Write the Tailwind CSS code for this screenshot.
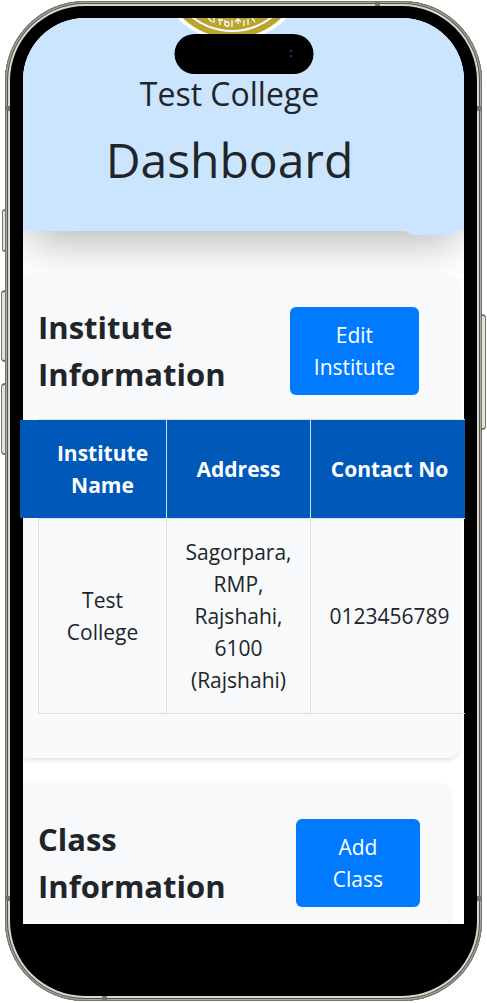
<!DOCTYPE html>
<html lang="en">
<head>
  <meta charset="UTF-8">
  <meta name="viewport" content="width=device-width, initial-scale=1">
  <title>Test College Dashboard</title>
  <script src="https://cdn.jsdelivr.net/npm/@tailwindcss/browser@4"></script>
</head>
<body class="bg-white px-[5px] py-px font-['Open_Sans',sans-serif] text-[#212529]">

  <!-- Phone frame -->
  <div class="relative rounded-[80px] bg-black px-[18px] pt-[17px] pb-[77px] shadow-[inset_0_0_0_1px_#77736c,inset_0_0_0_2px_#aaa69e,inset_0_0_0_3px_#57534d,inset_0_0_0_5px_#d9d6cd]">

    <!-- Side buttons -->
    <div class="absolute -left-[3px] top-[208px] h-[43px] w-[3px] rounded-l-sm border-y-2 border-l border-[#77736c] bg-[#e4e2dc]"></div>
    <div class="absolute -left-[4px] top-[289px] h-[72px] w-[4px] rounded-l-sm border-y-2 border-l border-[#77736c] bg-[#e4e2dc]"></div>
    <div class="absolute -left-[4px] top-[382px] h-[72px] w-[4px] rounded-l-sm border-y-2 border-l border-[#77736c] bg-[#e4e2dc]"></div>
    <div class="absolute -right-[4px] top-[313px] h-[116px] w-[4px] rounded-r-sm border-y-2 border-r border-[#77736c] bg-[#e4e2dc]"></div>

    <!-- Antenna bands -->
    <div class="absolute left-0 top-[105px] h-[5px] w-[5px] bg-[#77736c]"></div>
    <div class="absolute right-0 top-[105px] h-[5px] w-[5px] bg-[#77736c]"></div>
    <div class="absolute bottom-[100px] left-0 h-[5px] w-[5px] bg-[#77736c]"></div>
    <div class="absolute bottom-[100px] right-0 h-[5px] w-[5px] bg-[#77736c]"></div>
    <div class="absolute right-[102px] top-0 h-[5px] w-[5px] bg-[#77736c]"></div>
    <div class="absolute bottom-0 left-[97px] h-[5px] w-[5px] bg-[#77736c]"></div>

    <!-- Dynamic island -->
    <div class="absolute left-1/2 top-[33px] z-10 h-10 w-[139px] -translate-x-1/2 rounded-full bg-black">
      <div class="absolute right-[21px] top-[16px] flex h-[7px] w-[3px] flex-col justify-between">
        <span class="h-[2px] rounded-full bg-[#262c66]"></span>
        <span class="h-[2px] rounded-full bg-[#262c66]"></span>
      </div>
    </div>

    <main class="bg-white rounded-t-[62px]">
      <div class="overflow-hidden rounded-t-[62px] pb-[43px]">
        <header class="relative bg-[#cce5ff] pt-[52px] pr-7 pb-[42px] text-center shadow-[0_16px_44px_-6px_rgba(0,0,0,0.3)]">
          <svg class="absolute left-1/2 top-0 h-[22px] w-[120px] -translate-x-[72px]" viewBox="0 0 120 22" aria-hidden="true">
            <circle cx="60" cy="-54" r="77" fill="#fff" />
            <circle cx="60" cy="-51" r="71" fill="#baa42f" />
            <circle cx="60" cy="-51" r="65" fill="#fff" />
            <circle cx="60" cy="-51" r="63" fill="#baa42f" />
            <g fill="none" stroke="#fff" stroke-width="1.3">
              <path d="M36 0l4 4M42 0v5M46 2h5M48 1v6M53 2v6M53 5q4-3 4 1t-4 1M60 2v7M63 4l3-3 3 3M66 2v4M72 2v6M76 1v6M80 0l3 4" />
            </g>
          </svg>
          <div class="absolute right-0 -bottom-1 h-8 w-16 rounded-b-2xl bg-[#cce5ff]"></div>
          <p class="text-[32px] leading-[48px]">Test College</p>
          <h1 class="relative mt-3 text-[48px] leading-[59px]">Dashboard</h1>
        </header>
      </div>

      <section class="relative mr-1 rounded-r-xl bg-[#f8f9fb] pt-[30px] pb-11 shadow-[0_3px_4px_-1px_rgba(0,0,0,0.12)]">
        <div class="flex items-center justify-between pl-[15px] pr-[41px]">
          <h2 class="text-[31px] leading-[47px] font-bold">Institute<br>Information</h2>
          <button type="button" class="rounded-md bg-[#007bff] px-6 py-3 text-[21px] leading-8 text-white">Edit<br>Institute</button>
        </div>

        <div class="-ml-[3px] -mr-[5px] mt-[21px] overflow-hidden pl-[18px]">
          <table class="w-[431px] table-fixed border-collapse text-center text-[21px] leading-8">
            <thead class="text-white">
              <tr>
                <th class="relative w-32 border border-[#dcdedf] bg-[#0059b8] py-[17px] before:absolute before:inset-y-0 before:right-full before:w-5 before:bg-[#0059b8]">Institute<br>Name</th>
                <th class="w-36 border border-[#dcdedf] bg-[#0059b8]">Address</th>
                <th class="border border-[#dcdedf] bg-[#0059b8]">Contact No</th>
              </tr>
            </thead>
            <tbody>
              <tr>
                <td class="border border-[#dcdedf] py-[17px]">Test<br>College</td>
                <td class="border border-[#dcdedf] py-[17px]">Sagorpara,<br>RMP,<br>Rajshahi,<br>6100<br>(Rajshahi)</td>
                <td class="border border-[#dcdedf] py-[17px]">0123456789</td>
              </tr>
            </tbody>
          </table>
        </div>
      </section>

      <div class="overflow-hidden pt-[27px]">
        <section class="mr-[14px] rounded-tr-xl bg-[#f8f9fb] pt-[31px] pb-[14px] shadow-[0_0_6px_rgba(0,0,0,0.08)]">
          <div class="flex items-center justify-between pl-[15px] pr-[30px]">
            <h2 class="text-[31px] leading-[47px] font-bold">Class<br>Information</h2>
            <button type="button" class="rounded-md bg-[#007bff] px-[37px] py-3 text-[21px] leading-8 text-white">Add<br>Class</button>
          </div>
        </section>
      </div>
    </main>
  </div>

</body>
</html>
